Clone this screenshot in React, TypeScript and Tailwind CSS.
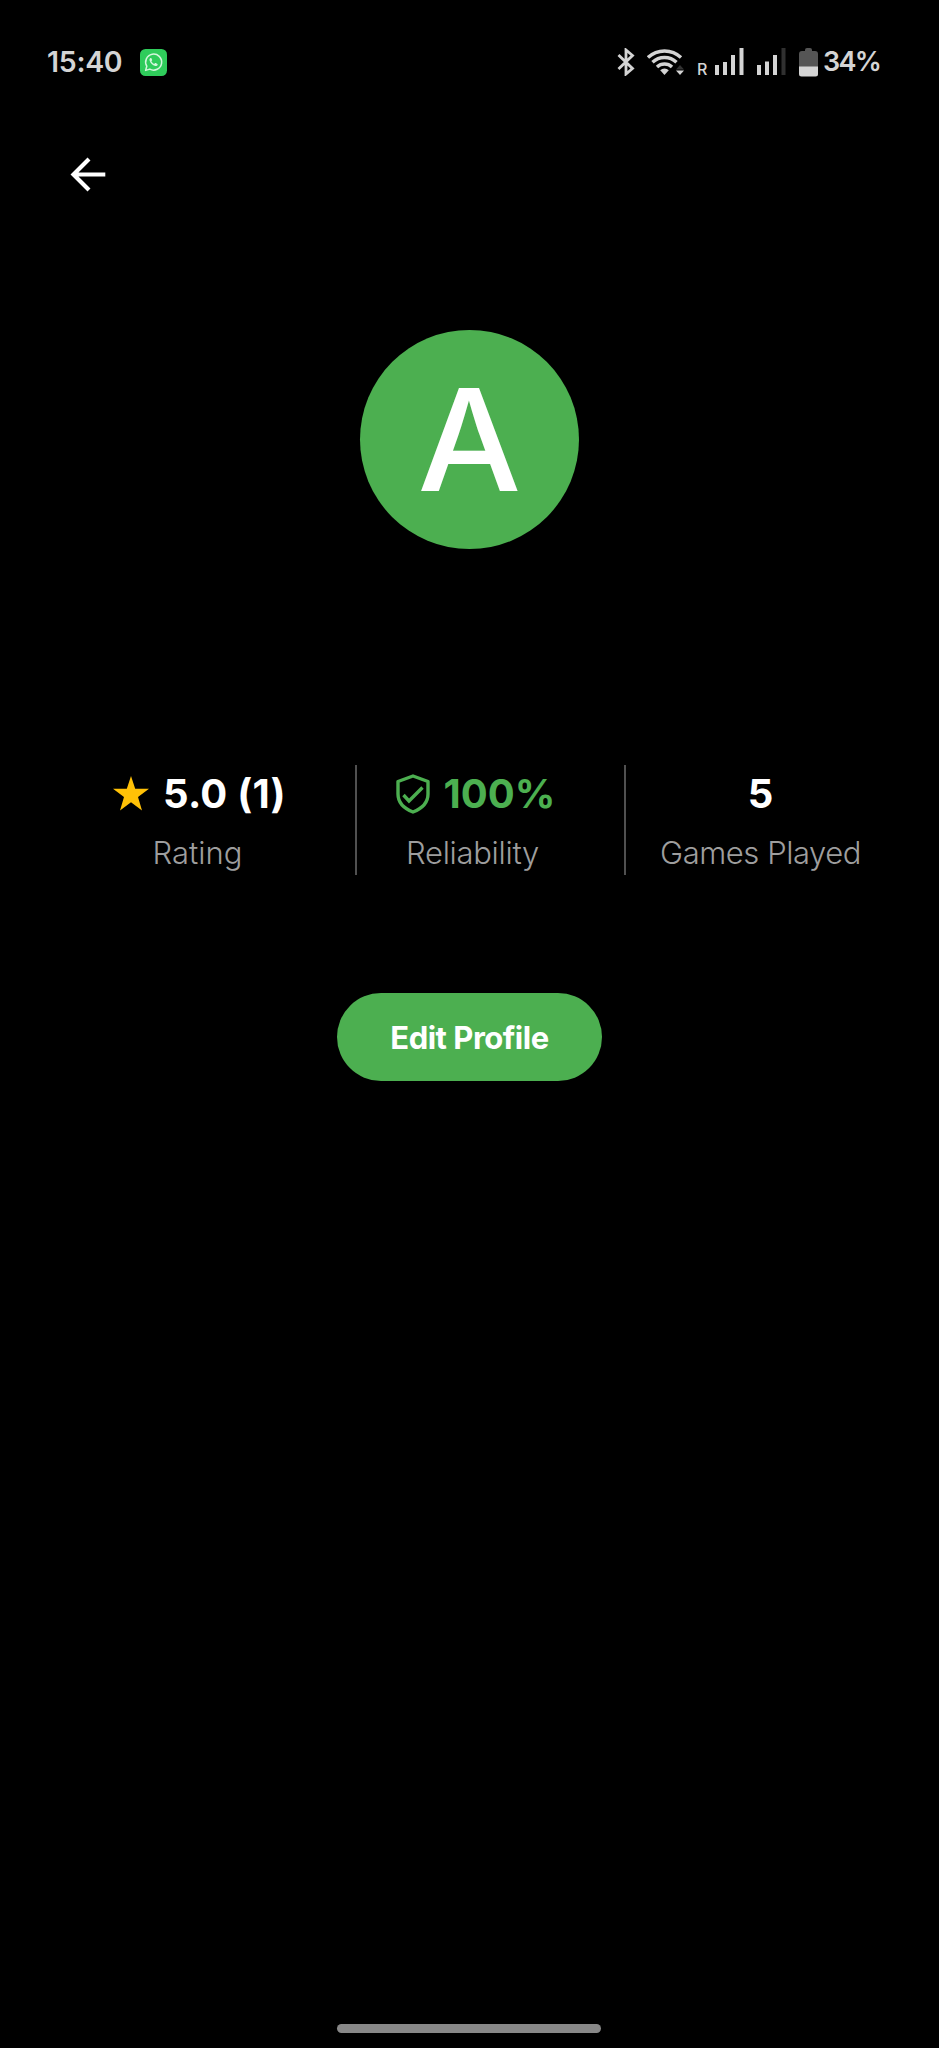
import React from "react";

function StatusBar() {
  return (
    <header className="flex h-[124px] items-start justify-between pl-[47px] pr-[60px] pt-[45px] text-[#d4d4d4]">
      <div className="flex h-[34px] items-center">
        <span className="w-[93px] whitespace-nowrap text-[28.5px] font-semibold leading-[32px] tracking-[-0.3px]">15:40</span>
        <svg width="27" height="27" viewBox="0 0 27 27">
          <rect width="27" height="27" rx="5.5" fill="#2fcc5b" />
          <path d="M5.6 21.4l1.2-4.2a8 8 0 1 1 3 2.9z" fill="none" stroke="#d3f7dc" strokeWidth="1.5" strokeLinejoin="round" />
          <path d="M10.4 9.1c-.7.5-1.1 1.3-.8 2.3.8 2.7 3 4.9 5.6 5.6 1 .3 2-.2 2.4-1.1.2-.5.1-.8-.2-1l-1.6-.9c-.4-.2-.7-.1-1 .2l-.6.7c-1.3-.5-2.3-1.500-2.800-2.700l.6-.7c.2-.3.2-.5.1-.8l-.7-1.500c-.2-.4-.6-.4-1-.1z" fill="#d3f7dc" />
        </svg>
      </div>
      <div className="flex h-[34px] items-center">
        <svg className="mr-[12px]" width="18" height="28" viewBox="0 0 18 28" fill="none" stroke="currentColor" strokeWidth="2.8">
          <path d="M1.500 7l14 13.500-6.500 5.500V2l6.500 5.500L1.500 21" />
        </svg>
        <svg className="mr-[13px]" width="37" height="28" viewBox="0 0 37 28" fill="none" stroke="currentColor" strokeWidth="3.4">
          <path d="M1 9.500a24 24 0 0 1 33 0" />
          <path d="M5.500 14.200a17.500 17.500 0 0 1 24 0" />
          <path d="M10 19a11 11 0 0 1 15 0" />
          <path d="M17.500 27l-4.300-4.800a6 6 0 0 1 8.600 0z" fill="currentColor" stroke="none" />
          <path d="M29 21.500l4-4.500 4 4.500z" fill="#333" stroke="none" />
          <path d="M29 22.500h8l-4 4.500z" fill="currentColor" stroke="none" />
        </svg>
        <span className="mr-[8px] mt-[13px] w-[10px] text-[16px] font-medium leading-[14px]">R</span>
        <svg className="mr-[13px]" width="29" height="28" viewBox="0 0 29 28" fill="currentColor">
          <path d="M0 17h4v10H0zM8 14h4v13H8zM16 7h4v20h-4zM24.500 0h4v27h-4z" />
        </svg>
        <svg className="mr-[13px]" width="29" height="28" viewBox="0 0 29 28" fill="currentColor">
          <path d="M0 17h4v10H0zM8 13.500h4V27H8zM16 7h4v20h-4z" />
          <path d="M24.500 0h4v27h-4z" fill="#303030" />
        </svg>
        <svg className="mr-[5px]" width="19" height="29" viewBox="0 0 19 29">
          <path d="M3 3h3V2q0-2 2-2h3q2 0 2 2v1h3q3 0 3 3v13H0V6q0-3 3-3z" fill="#555" />
          <path d="M0 18.500h19V26q0 2.500-2.500 2.500h-14Q0 28.500 0 26z" fill="currentColor" />
        </svg>
        <span className="w-[56px] whitespace-nowrap text-[27px] font-semibold leading-[32px] tracking-[-1.7px]">34%</span>
      </div>
    </header>
  );
}

function Divider() {
  return <div className="h-[110px] w-[2px] shrink-0 bg-[#505050]" />;
}

interface StatProps {
  value: string;
  label: string;
  valueClass: string;
  labelClass: string;
  icon?: React.ReactNode;
}

function Stat({ value, label, valueClass, labelClass, icon }: StatProps) {
  return (
    <div className="flex flex-col items-center whitespace-nowrap pt-[8px]">
      <div className={`flex h-[42px] items-center gap-[14px] ${valueClass}`}>
        {icon}
        <span className="text-[40px] font-bold leading-[42px]">{value}</span>
      </div>
      <div className={`mt-[17px] text-[31px] font-light leading-[42px] text-[#9e9e9e] ${labelClass}`}>{label}</div>
    </div>
  );
}

export default function App() {
  return (
    <div className="flex h-[2048px] w-[939px] flex-col bg-black font-['Inter','Roboto',sans-serif]">
      <StatusBar />
      <button aria-label="Back" className="ml-[70px] mt-[33px] h-[36px] w-[36px]">
        <svg width="36" height="36" viewBox="0 0 36 36" fill="none" stroke="#fff" strokeWidth="4.2">
          <path d="M35.300 17.500H4M19 2L3.500 17.500 19 33" />
        </svg>
      </button>
      <div className="mt-[137px] flex size-[219px] items-center justify-center self-center rounded-full bg-[#4caf50] pb-[2px] text-[142px] font-medium leading-none text-white">
        <span className="scale-x-[1.03]">A</span>
      </div>

      <section className="mt-[216px] flex h-[110px]">
        <div className="ml-[41px] w-[314px]">
          <Stat
            value="5.0 (1)"
            label="Rating"
            valueClass="pl-[3px] text-white tracking-[0.2px]"
            labelClass="pr-[1px]"
            icon={
              <svg className="mb-[2px]" width="36" height="35" viewBox="0 0 36 35">
                <path d="M18 0l4.200 12.700H36L25 20.900 29 34.500 18 26.300 7 34.500l4-13.600L0 12.700h13.800z" fill="#ffc107" />
              </svg>
            }
          />
        </div>
        <Divider />
        <div className="mr-[33px] w-[234px]">
          <Stat
            value="100%"
            label="Reliability"
            valueClass="pl-[3px] text-[#4caf50]"
            labelClass="pr-[3px] tracking-[-0.3px]"
            icon={
              <svg width="34" height="40" viewBox="0 0 34 40" fill="none" stroke="currentColor" strokeWidth="3.4">
                <path d="M17 2L32 7.500V20c0 9-6 14.500-15 18C8 34.500 2 29 2 20V7.500z" strokeLinejoin="round" />
                <path d="M7.500 21l5.500 6 13.500-13.500" />
              </svg>
            }
          />
        </div>
        <Divider />
        <div className="w-[269px]">
          <Stat value="5" label="Games Played" valueClass="text-white" labelClass="tracking-[-0.45px]" />
        </div>
      </section>

      <button className="mt-[118px] h-[88px] w-[265px] self-center rounded-full bg-[#4caf50] text-[31px] font-bold leading-none tracking-[-0.5px] text-white">
        Edit Profile
      </button>
      <div className="mb-[15px] mr-[338px] mt-auto h-[9px] w-[264px] self-end rounded-full bg-[#888]" />
    </div>
  );
}
